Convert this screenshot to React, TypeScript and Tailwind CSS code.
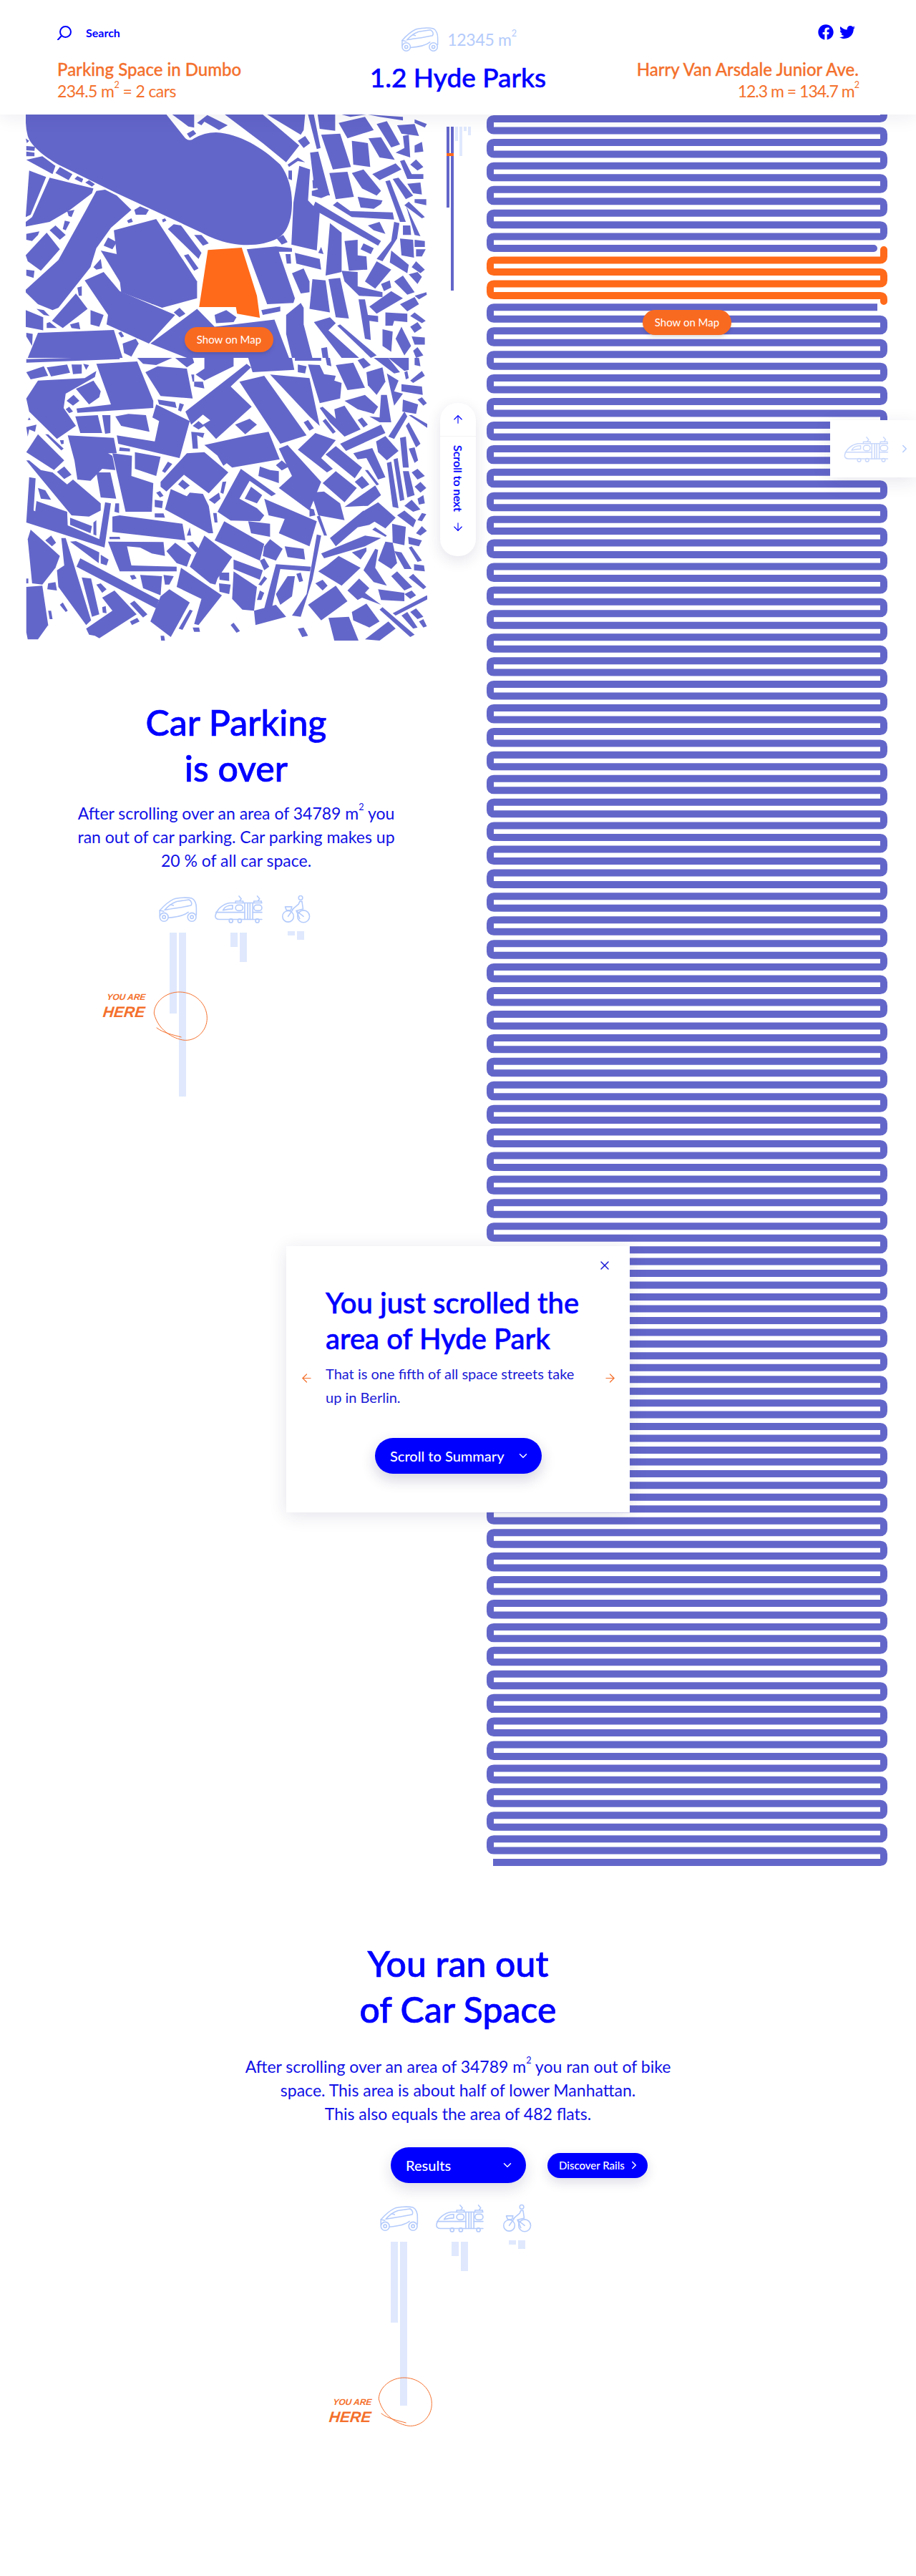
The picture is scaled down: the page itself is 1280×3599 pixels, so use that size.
import { ArrowDown, ArrowLeft, ArrowRight, ArrowUp, ChevronDown, ChevronRight, X } from "lucide-react";
import { FaFacebook, FaTwitter } from "react-icons/fa";

const ROW_PITCH = 16.46;
const rowY = (k: number) => 6 + k * ROW_PITCH;

// builds the serpentine street, even rows run right to left, odd rows left to right
const snakeRows = (from: number, to: number, endX: number) => {
  const L = 5;
  const R = 555;
  const r = 5;
  let d = "";
  for (let k = from; k < to; k++) {
    const y = rowY(k);
    const y2 = rowY(k + 1);
    if (k % 2 === 0) {
      d += ` H${L + r} Q${L},${y} ${L},${y + r} V${y2 - r} Q${L},${y2} ${L + r},${y2}`;
    } else {
      d += ` H${R - r} Q${R},${y} ${R},${y + r} V${y2 - r} Q${R},${y2} ${R - r},${y2}`;
    }
  }
  return d + ` H${endX}`;
};

// traced in 2.45 x 3 crop coordinates, y from 480
const MAP_TOP = [
  "590,480 665,480 665,535 645,530", "675,515 710,482 780,525 750,545 700,510 690,525", "640,560 662,545 672,560 650,578",
  "770,480 900,480 1025,610 980,680 900,600", "915,480 1045,480 1040,545 1030,565", "1020,590 1045,570 1062,600 1040,620",
  "1055,480 1075,480 1098,620 1085,625", "1062,640 1090,635 1130,820 1100,810 1075,770", "1088,480 1148,480 1148,548 1095,540",
  "1100,565 1165,560 1202,700 1140,710", "1160,515 1250,490 1280,545 1190,580", "1290,520 1325,508 1370,605 1340,618",
  "1205,590 1260,600 1268,700 1210,690", "1262,580 1305,575 1352,670 1300,660", "1360,525 1420,520 1435,570 1375,560",
  "1380,570 1400,565 1405,660 1355,640 1385,620", "1420,500 1462,520 1455,535 1420,515", "1170,480 1255,480 1200,490",
  "1260,480 1380,490 1380,505 1300,490", "1420,610 1445,595 1450,635 1420,640", "1405,690 1425,668 1450,700 1430,715",
  "1370,675 1385,670 1410,730 1450,730 1450,750 1395,750", "1128,725 1190,720 1212,825 1150,835", "1205,725 1245,710 1305,800 1290,820 1240,790",
  "1275,730 1355,685 1375,710 1300,755", "1320,760 1335,755 1390,930 1370,930", "1345,750 1365,745 1415,820 1390,835",
  "1395,770 1440,765 1445,815 1415,810", "1420,835 1460,835 1460,860 1420,850", "1225,825 1310,840 1305,855 1280,875 1235,870",
  "1140,860 1155,845 1200,885 1345,890 1350,920 1205,910", "1070,875 1080,845 1305,1010 1295,1030", "1385,860 1400,845 1455,910 1445,915",
  "1390,860 1440,990 1420,985", "1260,945 1300,930 1320,980 1280,965", "1130,935 1170,975 1170,1140 1115,1155",
  "1380,945 1405,945 1408,985 1380,985", "1370,1000 1415,1005 1418,1080 1375,1070", "1420,1005 1455,1010 1455,1035 1420,1035",
  "1425,1045 1458,1045 1445,1075 1425,1075", "1180,1010 1225,1005 1225,1070 1255,1075 1258,1130 1195,1135", "1235,1045 1245,1020 1280,1040 1270,1065",
  "1350,930 1368,935 1360,1000 1310,1095 1290,1085 1340,1010", "1340,1050 1400,1110 1395,1145 1335,1100", "1410,1120 1425,1095 1455,1130 1440,1145",
  "1290,1095 1340,1130 1285,1210 1250,1180", "1400,1150 1430,1140 1445,1160 1430,1190", "1350,1180 1380,1155 1420,1225 1395,1235",
  "1170,1135 1225,1140 1225,1200 1310,1225 1310,1245 1230,1240 1180,1180", "1305,1190 1335,1175 1340,1205 1315,1220", "1010,1060 1095,1085 1100,1130 1015,1105",
  "1000,1145 1040,1125 1060,1180 1060,1225 1030,1230", "1070,1170 1115,1175 1130,1310 1060,1295", "1125,1170 1165,1165 1195,1335 1150,1330",
  "1228,1255 1250,1255 1260,1320 1295,1325 1295,1350 1265,1345 1270,1425 1250,1420", "1265,1285 1340,1220 1380,1250 1290,1315", "1370,1275 1420,1245 1435,1275 1395,1305",
  "1420,1240 1460,1225 1462,1235 1435,1255", "1320,1310 1395,1315 1395,1350 1350,1345 1345,1365 1320,1365", "1405,1325 1420,1310 1458,1345 1445,1355",
  "1405,1370 1430,1350 1445,1375 1420,1395", "1310,1380 1345,1390 1340,1475 1310,1450", "1355,1420 1375,1370 1408,1450 1385,1490",
  "1410,1410 1455,1415 1455,1445 1420,1445", "1415,1470 1430,1455 1450,1490 1425,1500", "845,1045 945,1033 1000,1040 1000,1055 955,1055 1010,1250 1005,1270 915,1275",
  "1025,695 1062,710 1055,840 1095,890 1085,1050 998,1025 1005,850", "985,690 1020,660 1045,680 1020,675 990,700", "988,715 1000,715 1000,755 988,750",
  "1070,755 1085,755 1085,790 1072,790", "1068,800 1100,790 1130,815 1100,830 1068,820", "948,1000 970,985 985,1015 965,1025",
  "978,1065 995,1065 997,1105 982,1105", "1090,1060 1100,1035 1108,1065", "88,580 100,590 92,600", "90,612 120,615 118,632 90,630", "90,635 118,640 118,655 90,655",
  "90,670 145,655 190,695 180,730", "190,725 205,700 248,730 235,755", "255,750 265,738 285,750 280,765", "292,765 305,755 325,772 315,782",
  "100,715 158,742 105,900 88,910", "170,745 320,790 315,810 240,880 170,930 88,950 88,930 110,910", "230,885 255,880 245,910 235,905",
  "222,925 240,930 225,965 215,960", "170,965 190,945 225,985 205,1005", "90,980 135,970 130,985 110,1010 90,1005", "88,1070 160,975 205,1045 140,1135 95,1095",
  "90,1130 118,1135 115,1165 90,1155", "330,800 360,795 400,820 450,880 380,955 330,1040 310,1120 200,1290 180,1300 130,1275 88,1225 88,1215 200,1090 245,990 295,880",
  "355,1030 370,995 400,1015 385,1045", "400,1045 415,1040 425,1060 410,1065", "345,1050 400,1065 460,1185 420,1200", "320,1120 345,1085 350,1125 330,1130",
  "390,965 535,918 675,1180 675,1250 555,1290 415,1225", "460,880 480,865 510,880 500,900 465,900", "435,925 450,915 455,930 440,935", "555,920 565,915 570,925 558,932",
  "575,960 595,940 620,945 690,1060 680,1085", "665,985 690,985 715,1020 695,1030", "630,1070 645,1065 680,1125 665,1135",
  "290,1175 355,1140 410,1220 600,1320 510,1440 365,1360 370,1320", "445,1210 495,1205 500,1250 450,1235", "510,1245 520,1240 530,1270 520,1275", "595,1310 615,1290 635,1315 615,1330",
  "265,1205 280,1200 280,1240 270,1240", "178,1345 260,1230 300,1295 215,1375", "240,1360 270,1350 275,1380 245,1375", "310,1300 355,1320 340,1370 310,1360",
  "125,1295 150,1300 170,1325 150,1320", "88,1300 148,1330 148,1385 88,1370", "160,1355 170,1350 195,1375 160,1375", "90,1395 112,1400 110,1450 90,1410",
  "130,1395 390,1383 420,1500 95,1500", "405,1395 415,1390 425,1410 415,1415", "460,1370 485,1375 470,1420 460,1400", "420,1440 465,1420 475,1440 450,1495 425,1480",
  "515,1440 675,1295 735,1370 940,1340 990,1500 640,1500", "735,1320 775,1300 810,1330 800,1350 740,1355", "895,1300 960,1285 960,1305 900,1320",
  "980,1320 1030,1270 1040,1290 1040,1360 1070,1500 1000,1500 980,1400", "1075,1350 1130,1330 1150,1355 1125,1385 1230,1500 1170,1500", "1155,1365 1165,1360 1290,1490 1270,1500",
  "1100,1460 1120,1455 1125,1500 1105,1500",
];

// same scale, y counted from 500 on the page
const MAP_BOTTOM = [
  "90,5 245,0 410,0 410,5 90,20", "90,60 150,35 165,75 105,90", "160,40 230,28 240,62 175,78", "245,28 280,28 280,65 250,68", "285,25 305,30 295,50",
  "470,0 590,0 535,30 490,25", "600,0 660,0 665,20 640,40", "700,0 800,0 800,35 700,95 670,70 700,45", "850,0 1000,0 1008,50 865,60", "1010,0 1100,0 1100,12 1010,12",
  "1115,0 1130,0 1135,35 1120,30", "1020,28 1050,35 1045,65 1020,60", "1055,28 1095,30 1110,68 1150,75 1145,95 1170,105 1165,170 1095,190 1075,110",
  "1150,30 1210,20 1250,125 1190,135", "1255,60 1310,40 1320,100 1290,155 1260,115", "1225,10 1245,0 1270,30 1245,45", "1280,0 1330,0 1370,60 1350,65", "1330,0 1400,0 1400,50 1385,55",
  "1420,0 1435,0 1440,35 1420,30", "1385,60 1395,55 1400,85 1390,90", "1405,95 1445,55 1455,75 1415,105", "1375,110 1445,120 1448,155 1375,140", "1325,65 1365,95 1350,140 1380,150 1350,200",
  "1430,175 1445,165 1462,190 1450,200", "1380,175 1432,195 1425,235 1378,225", "1180,180 1250,155 1295,205 1280,235 1225,215", "1095,210 1105,205 1150,255 1145,215 1180,200 1235,300 1180,330 1130,270",
  "1105,265 1115,255 1150,310 1140,318", "1225,260 1240,250 1260,280 1245,292", "1265,245 1300,250 1305,155 1325,155 1340,270 1300,270", "1330,330 1385,225 1395,245 1350,340",
  "1400,240 1410,240 1468,280 1465,295", "1390,285 1400,270 1440,360 1425,375", "1165,360 1305,280 1320,315 1185,390", "1288,350 1320,328 1365,390 1325,430 1295,395",
  "1370,335 1390,330 1400,460 1380,460", "1400,380 1420,375 1432,430 1420,440", "1210,400 1275,378 1320,500 1295,510 1255,420 1225,425", "1250,470 1260,470 1298,530 1290,535",
  "1115,405 1150,370 1240,460 1215,505", "1105,525 1150,475 1222,545 1180,605", "1215,520 1240,495 1265,530 1240,550", "1180,625 1285,535 1305,575 1260,620",
  "1325,440 1340,435 1365,630 1345,625", "1348,425 1362,420 1385,595 1370,600", "1380,475 1400,475 1420,575 1395,585", "1410,480 1430,465 1455,495 1430,510",
  "1420,540 1440,520 1460,545 1440,565", "1430,590 1450,575 1455,610 1435,615", "1385,620 1410,595 1440,635 1415,645", "1360,660 1385,640 1425,680 1415,710",
  "1430,680 1445,650 1460,655 1445,685", "1425,735 1445,705 1462,725 1440,745", "1235,650 1295,605 1355,670 1320,715", "1130,755 1245,640 1285,685 1265,700 1225,710 1150,790",
  "1275,720 1285,710 1325,745 1320,750", "1343,695 1390,708 1385,785 1345,775", "1398,750 1445,765 1435,790 1400,780", "1100,820 1250,745 1305,755 1250,790 1110,840",
  "1020,385 1080,315 1150,345 1100,420 1140,465 1120,480", "955,380 985,365 1100,520 1060,640 955,545 1000,495", "905,590 1085,685 1060,790 955,735 975,675 920,660",
  "1065,565 1110,560 1165,610 1180,680 1090,660", "1060,630 1075,635 1080,660 1060,665", "1085,665 1095,660 1120,745 1110,745", "1085,740 1100,745 1070,930 1030,1085 1000,1080 1050,990",
  "1090,895 1120,870 1160,830 1235,880 1170,955", "1080,945 1105,930 1122,955 1105,975", "1055,1035 1150,955 1190,1020 1100,1100", "1125,1090 1195,1085 1228,1185 1145,1185",
  "1205,1065 1255,1030 1300,1105 1265,1130 1210,1100", "1190,975 1230,925 1265,965 1250,985 1305,1035 1240,1005 1225,1015", "1250,1180 1330,1105 1355,1135 1300,1185",
  "1300,1055 1310,1045 1420,1160 1405,1170", "1345,1070 1462,995 1468,1010 1355,1080", "1375,1080 1395,1065 1430,1130 1415,1135", "1405,1065 1425,1050 1450,1085 1430,1095",
  "1435,1105 1450,1095 1462,1125 1450,1130", "1295,970 1385,985 1385,1020 1305,1015", "1385,990 1410,975 1425,995 1405,1010", "1340,915 1360,895 1412,960 1385,975",
  "1400,920 1415,905 1460,960 1450,970", "1295,850 1320,770 1345,775 1360,860 1340,885", "1350,810 1375,815 1410,885 1385,885", "1400,795 1410,790 1445,850 1430,855",
  "1418,865 1452,870 1455,895 1418,890", "1285,800 1295,805 1285,880 1325,955 1280,940 1245,890", "1205,815 1255,795 1255,810 1235,845 1225,835", "820,100 905,75 1050,325 960,360",
  "925,70 1060,85 1095,285 1060,245", "1040,270 1055,260 1075,295 1060,305", "700,365 850,325 920,310 958,425 795,460", "805,280 855,255 880,280 840,320",
  "635,225 845,25 860,40 790,120 862,205 740,340 695,280 720,262 695,238 655,280", "660,285 680,265 700,285 680,300", "655,310 700,315 695,335 675,325 678,380 660,380",
  "745,410 760,405 778,440 765,452", "498,60 540,35 640,45 660,170 550,160", "655,70 665,70 665,100 660,100", "665,100 695,100 700,128 665,120", "540,175 600,185 605,210 545,195",
  "615,190 630,195 620,225 610,220", "330,25 470,15 525,180 525,210 265,230 262,212 380,195", "90,170 130,95 290,85 330,55 325,80 225,150 218,210 260,285 195,340 100,225",
  "260,130 320,95 345,140 340,165 305,195", "228,180 252,155 272,180 250,200", "225,215 237,205 250,225 237,232", "258,245 335,240 350,315 275,315", "350,240 378,240 378,315 360,318",
  "395,245 440,235 500,240 512,310 415,285", "400,325 530,350 545,265 522,250 535,195 650,265 615,420 405,360", "232,325 390,335 400,400 370,400 385,410 395,470 350,465 310,515 265,510 255,430",
  "90,290 125,280 120,310 100,300 95,330", "95,260 100,250 105,260", "155,320 165,320 218,380 210,388", "205,345 218,345 218,360 210,362", "90,395 130,320 220,430 185,470",
  "90,430 100,430 140,470 180,480 230,530 250,510 345,610 345,640 305,665 245,660 130,490", "195,478 220,455 245,490 220,508", "385,400 452,410 450,495 525,525 520,645 430,645",
  "462,395 550,415 535,495 462,465", "410,375 445,380 445,392 408,390", "555,475 575,435 590,445 565,482", "330,480 378,480 398,590 345,585",
  "550,520 640,400 700,395 782,480 715,568 630,490 570,560 550,540", "610,530 625,510 650,535 632,552", "535,565 548,558 560,578 548,585", "530,595 558,600 555,630 530,625",
  "565,635 585,550 640,580 650,565 695,570 715,620 730,735 715,735", "715,595 750,565 755,590 735,612", "762,520 775,518 765,570 755,565",
  "745,645 825,465 945,570 930,580 855,515 820,590 880,630 905,660 890,685 790,682", "860,540 898,575 880,610 838,590", "925,470 955,475 955,525 885,495 890,455", "945,450 965,430 990,455 965,472",
  "730,650 742,650 745,690 735,690", "735,765 768,685 905,780 890,850", "905,790 925,760 968,800 945,850 900,830", "850,685 925,695 925,750 860,735", "975,790 1040,800 1045,845 985,835",
  "385,665 410,660 625,695 635,765 385,730", "530,652 560,652 565,670 530,668", "395,610 408,610 408,650 392,645", "360,605 380,610 358,795 90,690 100,500 122,505 115,640 340,760",
  "130,545 155,555 175,595 140,590", "125,600 230,645 232,705 120,650", "240,670 315,705 310,735 240,700", "320,690 330,680 330,745 320,740", "640,745 650,710 655,745",
  "640,775 660,770 685,805 670,815", "650,875 700,745 795,835 745,925 738,950 720,945", "570,810 600,775 655,825 640,875 605,860",
  "370,770 560,772 565,830 520,820 480,795 435,790 450,870 605,875 605,895 410,895 395,850", "620,880 760,995 680,1120 665,1115 690,1010 605,960", "550,1000 580,970 650,1025 585,1170 515,1105",
  "612,1135 650,1055 660,1060 625,1140", "660,1130 682,1130 685,1148 665,1148", "480,910 555,915 550,995 490,965", "560,910 595,915 580,950 565,950", "445,912 460,910 468,925 452,930",
  "375,750 410,750 412,760 375,760", "240,770 260,768 340,815 338,860", "345,825 372,845 365,870 345,862", "262,875 275,840 545,1015 535,1050", "330,950 345,945 365,970 350,985",
  "280,920 312,925 340,1075 315,1085", "210,755 225,755 312,1100 295,1120 200,960 195,890 220,870", "155,765 175,745 192,775 178,790", "95,760 105,720 205,830 190,880 145,950 110,945",
  "90,925 97,925 97,945 90,945", "90,960 145,955 165,1120 130,1180 95,1180 90,1150", "165,945 190,940 195,975 162,970", "165,1060 175,1060 180,1095 170,1095", "205,1035 215,1025 232,1060 225,1065",
  "295,1135 385,1060 350,1005 392,975 468,1075 340,1175 325,1165 305,1160", "350,1045 362,1040 365,1070 352,1068", "445,1105 470,1090 478,1105 452,1120", "445,1030 460,1018 505,1075 490,1088",
  "550,1165 562,1165 565,1185 552,1185", "790,1120 800,1110 822,1145 810,1152", "1020,1135 1040,1130 1055,1165 1035,1170", "795,1010 800,895 880,960 870,1060 830,1055",
  "800,845 900,890 890,930 800,885", "885,950 905,915 915,925 895,955", "880,1015 890,975 905,985 895,1015", "750,900 785,900 785,935 752,930", "750,945 790,950 785,990 752,980",
  "890,850 905,840 922,875 905,890", "905,1050 945,865 1065,875 1062,895 960,885 930,1055", "945,990 985,915 1010,915 1000,1000 960,1035", "1015,905 1030,900 1038,935 1025,940",
  "870,1060 945,1035 980,1085 875,1120",
];

const CityMap = () => (
  <svg width="561" height="735" viewBox="36 160 561 735" className="block">
    <g fill="#6366c9" transform="scale(0.408 0.3333)">
      <path d="M88,480 L570,480 L635,580 Q650,595 665,580 Q700,555 740,555 C820,560 900,620 960,690 C985,730 1000,790 1000,850 C1000,920 985,975 950,1000 C910,1025 850,1035 790,1020 C750,1010 720,995 690,975 L400,810 L200,690 C150,655 105,610 95,570 Q88,540 88,500 Z" />
      <polygon points="712,1048 828,1038 880,1240 890,1332 812,1315 808,1287 682,1287" fill="#ff6a1a" />
      {MAP_TOP.map((points) => (
        <polygon key={points} points={points} />
      ))}
    </g>
    <g fill="#6366c9" transform="translate(0 500) scale(0.408 0.3333)">
      {MAP_BOTTOM.map((points) => (
        <polygon key={points} points={points} />
      ))}
    </g>
  </svg>
);

const SmartCar = ({ className }: { className?: string }) => (
  <svg viewBox="56 66 178 122" className={className} fill="none" stroke="currentColor" strokeWidth="5" strokeLinecap="round" strokeLinejoin="round">
    <path d="M64,155 L64,130 C80,112 100,92 125,80 C145,72 190,71 208,76 C222,82 229,102 228,122 L228,150" />
    <path d="M86,128 C100,112 118,98 140,90 L195,82 C206,88 210,100 204,108 C170,116 120,122 86,128 Z" />
    <path d="M102,163 C140,160 178,150 192,138" />
    <path d="M64,130 L82,134 M112,104 L125,108" />
    <circle cx="83" cy="160" r="19" />
    <circle cx="83" cy="160" r="7" />
    <circle cx="208" cy="160" r="19" />
    <circle cx="208" cy="160" r="7" />
  </svg>
);

const Train = ({ className }: { className?: string }) => (
  <svg viewBox="292 60 210 125" className={className} fill="none" stroke="currentColor" strokeWidth="5" strokeLinecap="round" strokeLinejoin="round">
    <path d="M500,96 H360 C330,100 302,125 297,150 C295,162 303,168 315,168 H500" />
    <path d="M330,128 C335,115 350,106 372,106 L372,122 C355,122 345,124 330,128 Z" />
    <rect x="385" y="105" width="32" height="25" rx="12" />
    <rect x="465" y="105" width="35" height="25" rx="12" />
    <path d="M425,96 V168 M438,96 V168 M448,96 V168 M460,96 V168" />
    <path d="M300,137 H425 M460,137 H500" />
    <path d="M385,96 V88 H418 V96 M465,96 V88 H498 V96 M400,66 L410,78 L402,88 M480,66 L490,78 L482,88" />
    <circle cx="365" cy="174" r="8" />
    <circle cx="403" cy="174" r="8" />
    <circle cx="480" cy="174" r="8" />
  </svg>
);

const Bike = ({ className }: { className?: string }) => (
  <svg viewBox="572 58 132 128" className={className} fill="none" stroke="currentColor" strokeWidth="5" strokeLinecap="round" strokeLinejoin="round">
    <circle cx="603" cy="155" r="25" />
    <circle cx="672" cy="155" r="27" />
    <circle cx="659" cy="72" r="9" />
    <path d="M622,124 L650,100 L655,88 H665 L670,122 L640,130 L655,165" />
    <path d="M603,155 L625,124 M640,130 L672,155" />
    <path d="M590,112 H620 L615,128 H596 Z" />
  </svg>
);

type BarPair = { a: string; b: string; shift?: string };

const VehicleColumn = ({ icon, bars, width }: { icon: React.ReactNode; bars: BarPair; width: string }) => (
  <div className={`flex flex-col items-center ${width}`}>
    <div className="flex h-[40px] items-end">{icon}</div>
    <div className={`flex items-start gap-[3px] ${bars.shift ?? "mt-[13px]"}`}>
      <div className={`w-[10px] bg-[#dfe8fd] ${bars.a}`} />
      <div className={`w-[10px] bg-[#dfe8fd] ${bars.b}`} />
    </div>
  </div>
);

const YouAreHere = ({ textPos, circlePos }: { textPos: string; circlePos: string }) => (
  <>
    <div className={`absolute -skew-x-6 text-[#f4702c] italic font-bold leading-none ${textPos}`} style={{ fontFamily: '"Liberation Sans", sans-serif' }}>
      <div className="text-[12px] pl-[3px]">YOU ARE</div>
      <div className="text-[21px] mt-[4px]">HERE</div>
    </div>
    <svg viewBox="315 835 235 212" fill="none" stroke="#f4702c" strokeWidth="3" className={`absolute w-[78px] h-[71px] ${circlePos}`}>
      <path d="M322,930 C322,880 375,838 432,840 C495,842 545,890 545,950 C545,1000 505,1043 455,1043 C420,1043 340,1010 322,930 Z" />
      <path d="M437,1030 C400,1020 360,1012 332,990" />
    </svg>
  </>
);

const VehicleChart = ({ className, children }: { className: string; children: React.ReactNode }) => (
  <div className={`relative flex w-[215px] ${className}`}>
    <VehicleColumn width="w-[57px]" icon={<SmartCar className="h-[38px] w-[57px] text-[#b4cbfb]" />} bars={{ a: "h-[113px]", b: "h-[229px]" }} />
    <VehicleColumn width="w-[70px] ml-[21px]" icon={<Train className="h-[40px] w-[70px] text-[#b4cbfb]" />} bars={{ a: "h-[20px]", b: "h-[41px]" }} />
    <VehicleColumn width="w-[43px] ml-[24px]" icon={<Bike className="h-[40px] w-[43px] text-[#b4cbfb]" />} bars={{ a: "h-[6px]", b: "h-[12px]", shift: "mt-[11px]" }} />
    {children}
  </div>
);

const ShowOnMap = ({ className }: { className: string }) => (
  <button className={`absolute h-[35px] w-[124px] rounded-full bg-[#f96a21] text-[15px] text-white shadow-md ${className}`}>Show on Map</button>
);

const Sup = () => <sup className="text-[0.55em] align-[0.55em] leading-none">2</sup>;

const App = () => {
  return (
    <div className="relative min-h-[3599px] overflow-hidden bg-white text-[#0000ff]" style={{ fontFamily: 'Lato, "Noto Sans", sans-serif' }}>
      {/* Header */}
      <header className="relative z-20 grid h-[160px] grid-cols-3 bg-white px-[80px] shadow-[0_4px_24px_rgba(30,30,90,0.08)]">
        <div className="pt-[36px]">
          <div className="flex h-[20px] items-center gap-[20px]">
            <svg viewBox="0 0 20 20" className="h-[20px] w-[20px]" fill="none" stroke="currentColor" strokeWidth="2">
              <circle cx="11.5" cy="8.5" r="7.5" />
              <path d="M6,14 L1,19.5" strokeLinecap="round" />
            </svg>
            <span className="text-[16px] font-bold">Search</span>
          </div>
          <div className="mt-[26px] text-[#f4702c]">
            <div className="text-[24px] font-medium leading-[30px] [-webkit-text-stroke:0.3px]">Parking Space in Dumbo</div>
            <div className="text-[23px] font-normal leading-[30px] tracking-[-0.6px]">234.5 m<Sup /> = 2 cars</div>
          </div>
        </div>
        <div className="flex flex-col items-center pt-[37px]">
          <div className="flex h-[37px] items-center gap-[10px] text-[#b4cbfb]">
            <SmartCar className="h-[37px] w-[57px]" />
            <span className="text-[23px] font-normal tracking-[-0.3px]">12345 m<Sup /></span>
          </div>
          <h1 className="mt-[12px] text-[37px] font-medium leading-[44px] [-webkit-text-stroke:0.5px]">1.2 Hyde Parks</h1>
        </div>
        <div className="pt-[34px] text-right">
          <div className="flex h-[22px] items-center justify-end gap-[8px] pr-[5px]">
            <FaFacebook className="h-[22px] w-[22px]" />
            <FaTwitter className="h-[22px] w-[22px]" />
          </div>
          <div className="mt-[26px] text-[#f4702c]">
            <div className="text-[24px] font-medium leading-[30px] [-webkit-text-stroke:0.3px]">Harry Van Arsdale Junior Ave.</div>
            <div className="text-[23px] font-normal leading-[30px] tracking-[-1px]">12.3 m = 134.7 m<Sup /></div>
          </div>
        </div>
      </header>

      <main className="flex items-start">
        {/* Map and first summary */}
        <div className="w-[624px] pl-[36px]">
          <div className="relative w-[561px]">
            <CityMap />
            <ShowOnMap className="left-[222px] top-[297px]" />
          </div>
          <section className="w-[588px] pt-[82px]">
            <h2 className="text-center text-[50px] font-medium leading-[64px] [-webkit-text-stroke:0.7px]">
              Car Parking
              <br />
              is over
            </h2>
            <p className="mt-[15px] text-center text-[23px] font-normal leading-[33px] text-[#1010e6]">
              After scrolling over an area of 34789 m<Sup /> you
              <br />
              ran out of car parking. Car parking makes up
              <br />
              20 % of all car space.
            </p>
            <VehicleChart className="ml-[184px] mt-[31px]">
              <YouAreHere textPos="left-[-75px] top-[137px]" circlePos="left-[-7px] top-[134px]" />
            </VehicleChart>
          </section>
        </div>

        {/* Progress bars and scroll hint */}
        <div className="relative h-[500px] w-[56px] shrink-0">
          <div className="flex items-start gap-[2px] pt-[17px]">
            <div className="h-[113px] w-[4px] bg-[#6366c9]" />
            <div className="h-[229px] w-[4px] bg-[#6366c9]" />
            <div className="h-[20px] w-[4px] bg-[#dfe8fd]" />
            <div className="h-[41px] w-[4px] bg-[#dfe8fd]" />
            <div className="h-[6px] w-[4px] bg-[#dfe8fd]" />
            <div className="h-[12px] w-[4px] bg-[#dfe8fd]" />
          </div>
          <div className="absolute left-0 top-[54px] h-[4px] w-[10px] bg-[#ff6a1a]" />
          <div className="absolute left-[-9px] top-[403px] flex h-[214px] w-[50px] flex-col items-center rounded-[24px] bg-white shadow-[0_6px_20px_rgba(30,30,90,0.12)]">
            <div className="flex h-[47px] w-full items-center justify-center border-b border-gray-100">
              <ArrowUp className="h-[18px] w-[18px]" strokeWidth={1.5} />
            </div>
            <span className="mt-[12px] text-[16px] font-medium [writing-mode:vertical-rl] [-webkit-text-stroke:0.3px]">Scroll to next</span>
            <ArrowDown className="mt-[12px] h-[18px] w-[18px]" strokeWidth={1.5} />
          </div>
        </div>

        {/* Street serpentine */}
        <div className="relative w-[560px] shrink-0">
          <svg width="560" height="2448" viewBox="0 0 560 2448" fill="none" strokeWidth="10" className="block">
            <path d={`M555,-10 V1 Q555,${rowY(0)} 550,${rowY(0)}` + snakeRows(0, 11, 541)} stroke="#6366c9" strokeLinecap="round" />
            <path
              d={`M555,189 V${rowY(12) - 5} Q555,${rowY(12)} 550,${rowY(12)}` + snakeRows(12, 15, 550) + ` Q555,${rowY(15)} 555,${rowY(15) + 5} V${rowY(15) + 8}`}
              stroke="#ff6a1a"
              strokeLinecap="round"
            />
            <path d={`M546,${rowY(16)}` + snakeRows(16, 148, 9)} stroke="#6366c9" />
          </svg>
          <ShowOnMap className="left-[218px] top-[273px]" />
        </div>
      </main>

      {/* Second summary */}
      <section className="pt-[103px]">
        <h2 className="text-center text-[50px] font-medium leading-[64px] [-webkit-text-stroke:0.7px]">
          You ran out
          <br />
          of Car Space
        </h2>
        <p className="mt-[32px] text-center text-[23px] font-normal leading-[33px] text-[#1010e6]">
          After scrolling over an area of 34789 m<Sup /> you ran out of bike
          <br />
          space. This area is about half of lower Manhattan.
          <br />
          This also equals the area of 482 flats.
        </p>
        <div className="mt-[30px] flex items-center gap-[30px] pl-[546px]">
          <button className="flex h-[50px] w-[189px] items-center justify-between rounded-full bg-[#0000ff] pl-[21px] pr-[17px] text-[20px] font-medium text-white shadow-[0_8px_20px_rgba(30,30,90,0.15)]">
            Results
            <ChevronDown className="h-[18px] w-[18px]" />
          </button>
          <button className="flex h-[35px] w-[140px] items-center justify-between rounded-full bg-[#0000ff] pl-[16px] pr-[10px] text-[15px] font-medium text-white shadow-[0_6px_16px_rgba(30,30,90,0.15)]">
            Discover Rails
            <ChevronRight className="h-[18px] w-[18px]" />
          </button>
        </div>
        <VehicleChart className="ml-[529px] mt-[29px]">
          <YouAreHere textPos="left-[-68px] top-[271px]" circlePos="left-[-2px] top-[241px]" />
        </VehicleChart>
      </section>

      {/* Info card over the street */}
      <div className="absolute left-[400px] top-[1741px] z-10 h-[372px] w-[480px] bg-white shadow-[0_4px_24px_rgba(30,30,90,0.12)]">
        <X className="absolute right-[25px] top-[17px] h-[20px] w-[20px] text-[#1a1ad6]" strokeWidth={1.75} />
        <div className="pl-[55px] pt-[54px]">
          <h3 className="text-[40px] font-medium leading-[50px] [-webkit-text-stroke:0.6px]">
            You just scrolled the
            <br />
            area of Hyde Park
          </h3>
          <p className="mt-[8px] text-[20px] font-normal leading-[33px] text-[#1a1ad6]">
            That is one fifth of all space streets take
            <br />
            up in Berlin.
          </p>
        </div>
        <ArrowLeft className="absolute left-[19px] top-[175px] h-[19px] w-[19px] text-[#f4702c]" strokeWidth={1.5} />
        <ArrowRight className="absolute right-[18px] top-[175px] h-[19px] w-[19px] text-[#f4702c]" strokeWidth={1.5} />
        <button className="absolute left-[124px] top-[268px] flex h-[50px] w-[233px] items-center justify-between rounded-full bg-[#0000ff] pl-[21px] pr-[17px] text-[20px] font-medium text-white shadow-[0_8px_20px_rgba(30,30,90,0.2)]">
          Scroll to Summary
          <ChevronDown className="h-[18px] w-[18px]" />
        </button>
      </div>

      {/* Next category teaser */}
      <div className="absolute left-[1160px] top-[587px] z-10 flex h-[80px] w-[120px] items-center bg-white pl-[17px] shadow-[0_6px_24px_rgba(30,30,90,0.1)]">
        <Train className="h-[37px] w-[66px] text-[#c9d8fb]" />
        <ChevronRight className="ml-[12px] h-[18px] w-[18px] text-[#b4cbfb]" />
      </div>
    </div>
  );
};

export default App;
